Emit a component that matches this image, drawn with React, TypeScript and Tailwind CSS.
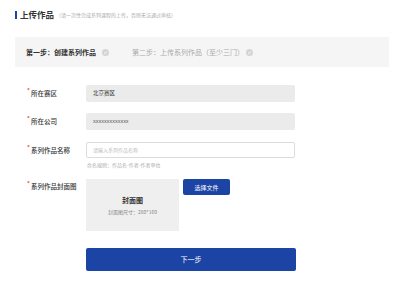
import React from 'react'

const font = { fontFamily: '"Noto Sans CJK SC", "Liberation Sans", sans-serif' }

function Label({ text }: { text: string }) {
  return (
    <div className="w-[60px] shrink-0 pl-[1px] text-[6.5px] font-medium text-[#333] leading-none">
      <span className="relative -top-[3px] mr-[1px] text-[6px] text-[#e53935]">*</span>
      {text}
    </div>
  )
}

function CheckDot() {
  return (
    <span className="flex h-[7px] w-[7px] shrink-0 items-center justify-center rounded-full bg-[#d4d4d4]">
      <svg viewBox="0 0 10 10" className="h-[5px] w-[5px]">
        <path d="M2 5.2 L4.2 7.2 L8 3" fill="none" stroke="#fff" strokeWidth="1.6" />
      </svg>
    </span>
  )
}

export default function App() {
  return (
    <div className="h-[283px] w-[407px] bg-white px-[15px] pt-[10px]" style={font}>
      <div className="flex items-center h-[9px]">
        <span className="mr-[3px] h-[8px] w-[2px] bg-[#1c44a4]" />
        <span className="text-[8.5px] font-bold text-[#333] leading-none">上传作品</span>
        <span className="ml-[2px] text-[5px] text-[#aaa] leading-none">（请一次性完成系列课程的上传，否则无法通过审核）</span>
      </div>

      <div className="mt-[18px] flex h-[30px] w-[374px] items-center bg-[#f5f5f5] pl-[11px]">
        <span className="text-[7px] font-bold text-[#333] leading-none">第一步：创建系列作品</span>
        <div className="ml-[6px] flex items-center"><CheckDot /></div>
        <span className="ml-[23px] text-[7px] text-[#aaa] leading-none">第二步：上传系列作品（至少三门）</span>
        <div className="ml-[2px] flex items-center"><CheckDot /></div>
      </div>

      <div className="pl-[11px] pt-[18px]">
        <div className="flex items-center">
          <Label text="所在赛区" />
          <div className="flex h-[17px] w-[209px] items-center rounded-[2px] bg-[#ebebeb] pl-[7px] text-[5.5px] text-[#333]">北京赛区</div>
        </div>
        <div className="mt-[11px] flex items-center">
          <Label text="所在公司" />
          <div className="flex h-[17px] w-[209px] items-center rounded-[2px] bg-[#ebebeb] pl-[7px] text-[5.5px] text-[#555]">xxxxxxxxxxxxx</div>
        </div>
        <div className="mt-[12px] flex items-center">
          <Label text="系列作品名称" />
          <div className="flex h-[16px] w-[209px] items-center rounded-[2px] border border-[#dcdcdc] bg-white pl-[6px] text-[5px] text-[#bbb]">请输入系列作品名称</div>
        </div>
        <div className="mt-[3px] pl-[61px] text-[5px] text-[#aaa] leading-[8px]">命名规则：作品名-作者-作者单位</div>

        <div className="mt-[10px] flex items-start">
          <div className="pt-[4px]"><Label text="系列作品封面图" /></div>
          <div className="flex h-[52px] w-[93px] flex-col items-center justify-center bg-[#efefef]">
            <span className="text-[7px] font-bold text-[#333] leading-none">封面图</span>
            <span className="mt-[5px] text-[5px] text-[#888] leading-none">封面图尺寸：280*160</span>
          </div>
          <button className="ml-[4px] flex h-[16px] w-[47px] items-center justify-center rounded-[2px] bg-[#1c44a4] text-[6px] text-white">选择文件</button>
        </div>

        <button className="mt-[17px] ml-[60px] flex h-[23px] w-[210px] items-center justify-center rounded-[2px] bg-[#1c44a4] text-[7px] text-white">下一步</button>
      </div>
    </div>
  )
}
